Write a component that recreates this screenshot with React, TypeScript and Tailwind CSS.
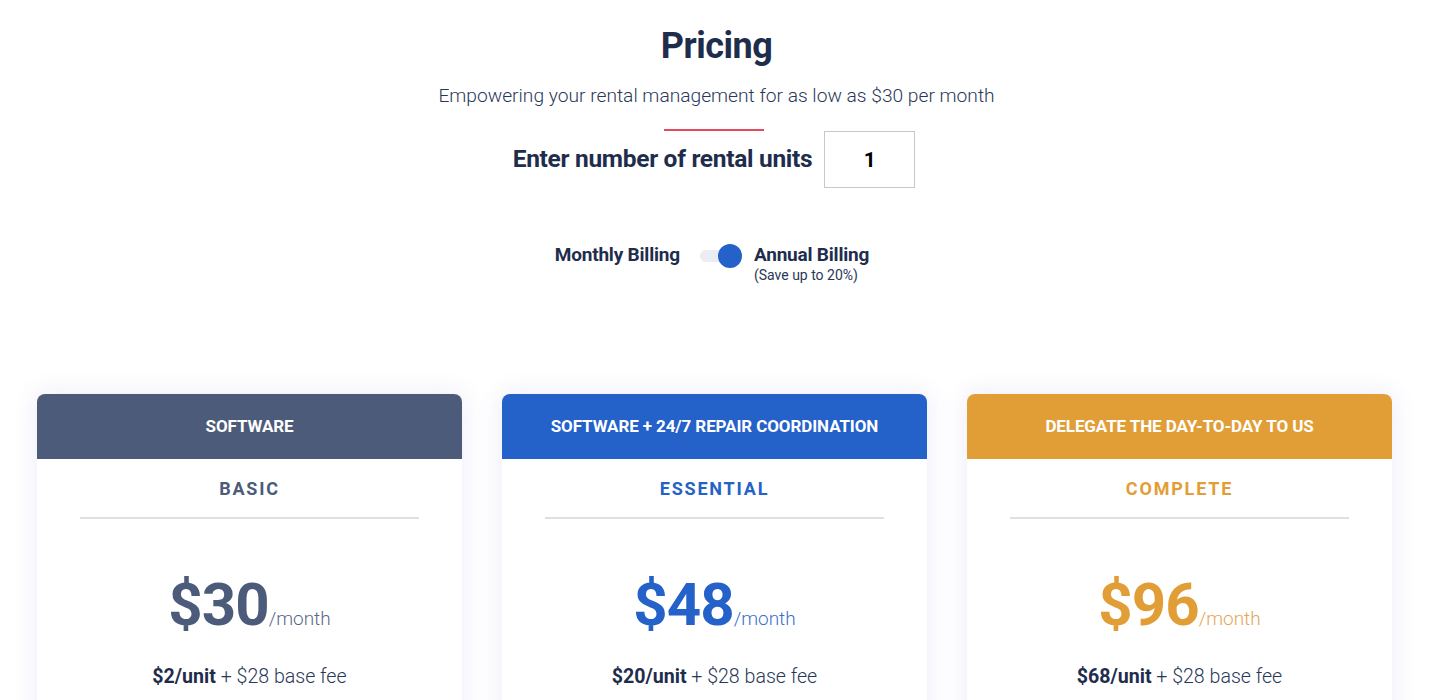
import { useState } from "react";

interface Plan {
  tag: string;
  name: string;
  price: number;
  perUnit: number;
  header: string;
  text: string;
  light: string;
}

const plans: Plan[] = [
  { tag: "Software", name: "Basic", price: 30, perUnit: 2, header: "bg-[#4c5b7a]", text: "text-[#4c5b7a]", light: "text-[#5a6785]" },
  { tag: "Software + 24/7 Repair Coordination", name: "Essential", price: 48, perUnit: 20, header: "bg-[#2461c8]", text: "text-[#2461c8]", light: "text-[#3a6fcc]" },
  { tag: "Delegate the day-to-day to us", name: "Complete", price: 96, perUnit: 68, header: "bg-[#e29e36]", text: "text-[#e29e36]", light: "text-[#e4a654]" },
];

export default function App() {
  const [units, setUnits] = useState("1");
  const [annual, setAnnual] = useState(true);

  return (
    <div className="min-h-screen bg-white font-['Roboto',sans-serif] text-[#1f2d4d] overflow-hidden">
      <div className="flex flex-col items-center pt-[24px]">
        <h1 className="text-[36px] leading-[44px] font-bold tracking-[-0.5px]">Pricing</h1>
        <p className="mt-[15px] text-[19.2px] font-light text-[#2a3858] leading-[26px]">
          Empowering your rental management for as low as $30 per month
        </p>
        <div className="mt-[20px] mr-[6px] h-[2px] w-[100px] bg-[#e24c5c]" />
        <div className="flex items-center gap-[12px] pr-[5px]">
          <span className="text-[24.5px] font-bold tracking-[-0.3px]">Enter number of rental units</span>
          <input
            className="h-[57px] w-[91px] border border-[#c8c8c8] text-center text-[21px] font-bold text-black outline-none"
            value={units}
            onChange={e => setUnits(e.target.value.replace(/[^0-9]/g, ""))}
          />
        </div>

        <div className="mt-[55px] flex items-start gap-[20px] pr-[9px]">
          <span className="text-[19px] font-bold leading-[24px] tracking-[-0.2px]">Monthly Billing</span>
          <button
            className="relative mt-[1px] h-[24px] w-[42px] cursor-pointer"
            onClick={() => setAnnual(!annual)}
          >
            <span className="absolute left-0 top-[6px] h-[12px] w-[40px] rounded-full bg-[#ececf6]" />
            <span
              className={`absolute top-0 h-[24px] w-[24px] rounded-full bg-[#2461c8] ${annual ? "left-[18px]" : "left-0"}`}
            />
          </button>
          <div className="-ml-[8px] flex flex-col">
            <span className="text-[19px] font-bold leading-[24px] tracking-[-0.2px]">Annual Billing</span>
            <span className="text-[14px] leading-[16px] text-[#2a3858]">(Save up to 20%)</span>
          </div>
        </div>
      </div>

      <div className="mt-[111px] flex gap-[40px] pl-[37px] pr-[41px]">
        {plans.map(p => (
          <div key={p.name} className="flex-1 overflow-hidden rounded-t-[8px] bg-white shadow-[0_0_24px_rgba(90,90,210,0.13)]">
            <div className={`${p.header} flex h-[65px] items-center justify-center text-[17px] font-bold uppercase tracking-[-0.1px] text-white`}>
              {p.tag}
            </div>
            <div className="px-[43px]">
              <div className={`${p.text} pt-[16px] pb-[15px] text-center text-[18px] font-bold uppercase tracking-[1.8px]`}>
                {p.name}
              </div>
              <div className="h-[2px] bg-[#e0e0e0]" />
              <div className="mt-[50px] flex items-baseline justify-center">
                <span className={`${p.text} text-[60px] font-bold leading-[72px] tracking-[-1px]`}>${p.price}</span>
                <span className={`${p.light} text-[19px] font-light`}>/month</span>
              </div>
              <div className="mt-[21px] text-center text-[19.6px] font-light text-[#2a3858]">
                <span className="font-bold text-[#1f2d4d]">${p.perUnit}/unit</span> + $28 base fee
              </div>
              <div className="h-[40px]" />
            </div>
          </div>
        ))}
      </div>
    </div>
  );
}
